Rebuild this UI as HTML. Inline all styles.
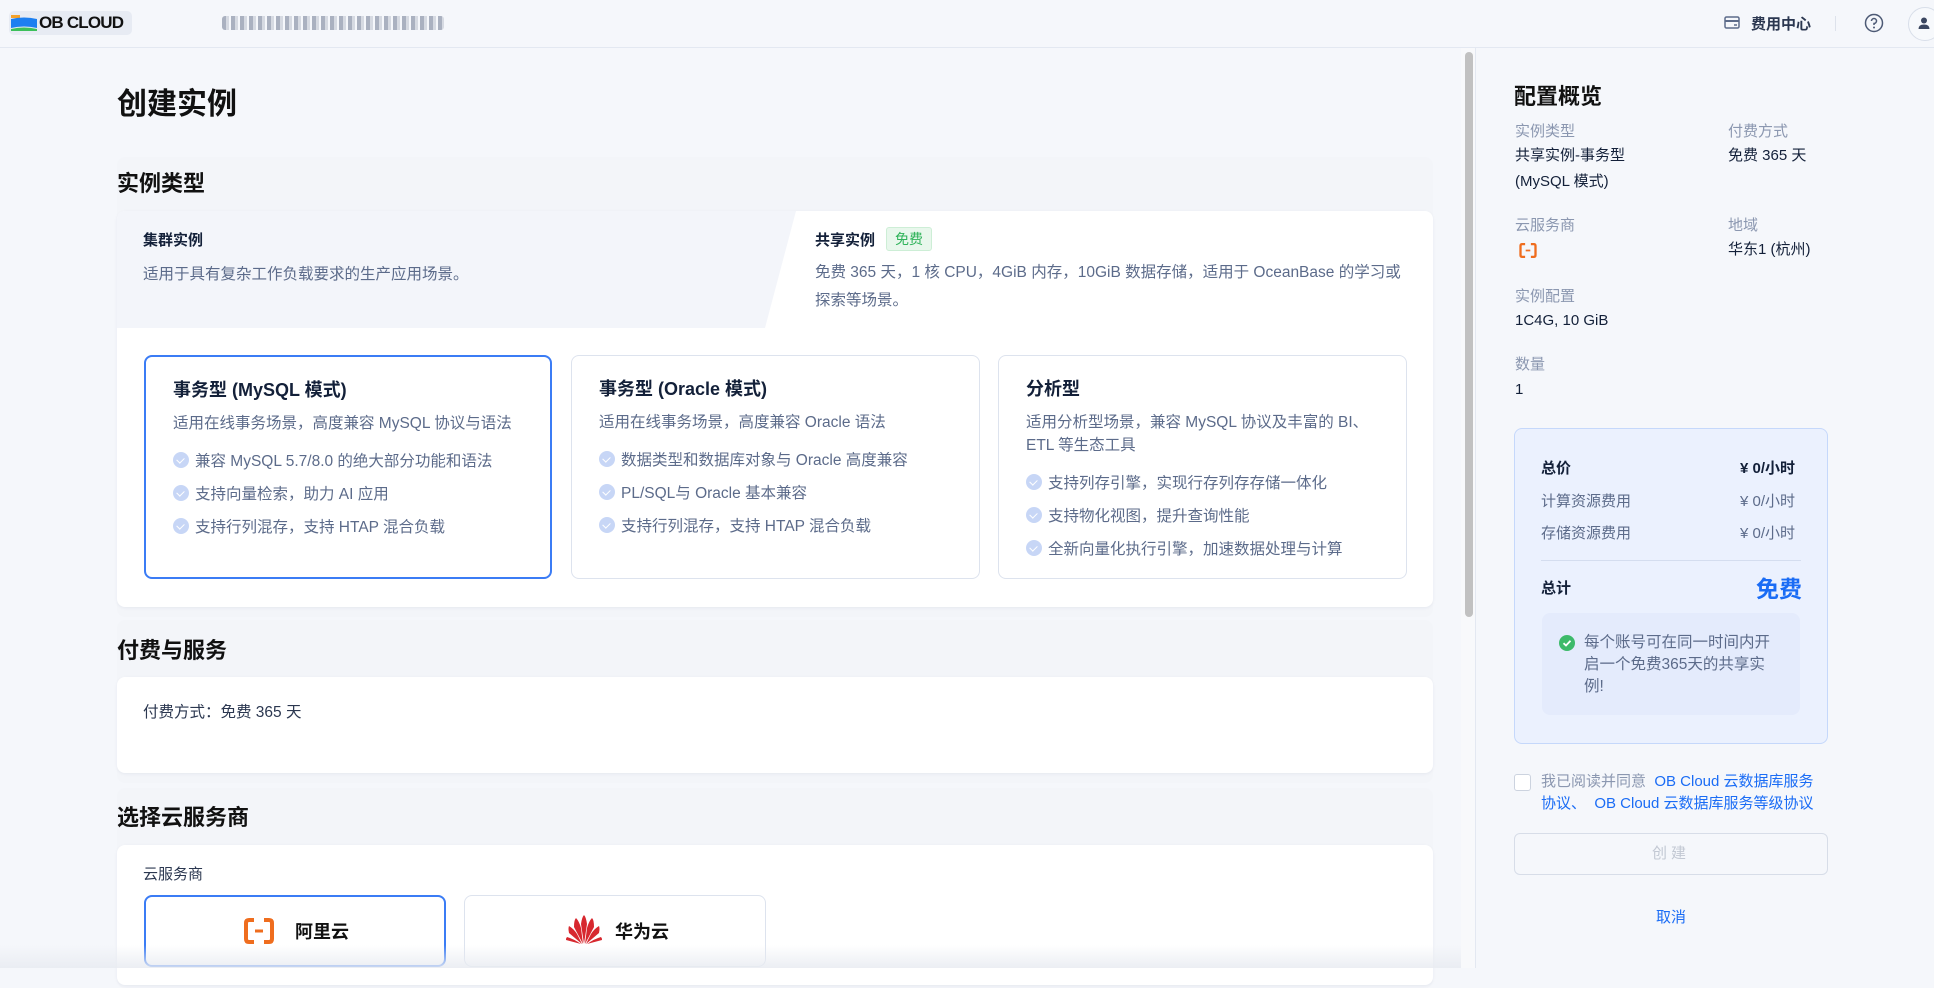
<!DOCTYPE html>
<html><head><meta charset="utf-8"><style>
*{margin:0;padding:0;box-sizing:border-box}
body{width:1934px;height:968px;overflow:hidden;background:#f5f7fb;font-family:"Liberation Sans","Noto Sans CJK SC",sans-serif;color:#132039;position:relative}
.a{position:absolute;white-space:nowrap}
.hdr{position:absolute;left:0;top:0;width:1934px;height:48px;background:#f5f7fb;border-bottom:1px solid #e3e8f1}
.panel{position:absolute;left:117px;width:1316px;background:#f3f5f9;border-radius:8px}
.white{position:absolute;background:#fff;border-radius:8px;box-shadow:0 1px 3px rgba(20,40,80,.06)}
.card{position:absolute;top:355px;height:224px;background:#fff;border:1.5px solid #dde3ee;border-radius:8px}
.card.sel{border:2px solid #3b7cf5}
.ct{position:absolute;left:27px;top:19px;font-size:18px;font-weight:bold;color:#132039}
.cd{position:absolute;left:27px;font-size:15.5px;color:#5c6b8a;line-height:23px;white-space:nowrap}
.bl{position:absolute;left:27px;font-size:15.5px;color:#5c6b8a;white-space:nowrap}
.bl i{display:inline-block;width:16px;height:16px;border-radius:50%;background:#c7d6f6;vertical-align:-2px;margin-right:6px;position:relative}
.bl i:after{content:"";position:absolute;left:5px;top:4px;width:4px;height:6px;border:solid #fff;border-width:0 1.6px 1.6px 0;transform:rotate(45deg)}
.lb{position:absolute;font-size:15px;color:#8b97b0;white-space:nowrap}
.vl{position:absolute;font-size:15px;color:#132039;white-space:nowrap;line-height:26px}
.pr{position:absolute;font-size:15px;white-space:nowrap}
</style></head><body>
<div class="hdr"></div>
<div class="a" style="left:9px;top:11px;width:123px;height:24px;background:#e7ebf3;border-radius:5px"></div>
<svg class="a" style="left:11px;top:15px" width="26" height="17" viewBox="0 0 26 17"><rect x="0" y="0" width="9" height="3" fill="#f5a22a"/><path d="M0 4 Q13 1 26 4 V13 Q13 10 0 13Z" fill="#1d7ff0"/><path d="M0 14 Q13 11 26 14 V16 H0Z" fill="#3cc05a"/></svg>
<div class="a" style="left:39px;top:13px;font-size:17px;font-weight:bold;letter-spacing:-0.8px;color:#111">OB CLOUD</div>
<div class="a" style="left:222px;top:16px;width:222px;height:14px;background:repeating-linear-gradient(90deg,#8a93a6 0 4px,#c9ced8 4px 7px,#f5f7fb 7px 9px);opacity:.7;border-radius:3px"></div>
<svg class="a" style="left:1724px;top:16px" width="16" height="13" viewBox="0 0 16 13"><rect x="1" y="1" width="14" height="11" rx="1.5" fill="none" stroke="#5c6b8a" stroke-width="1.5"/><path d="M1 5 H15" stroke="#5c6b8a" stroke-width="2"/><path d="M10 9 H13" stroke="#5c6b8a" stroke-width="1.5"/></svg>
<div class="a" style="left:1751px;top:13px;font-size:15px;font-weight:bold;color:#2b3750">费用中心</div>
<div class="a" style="left:1835px;top:16px;width:1px;height:15px;background:#dde2eb"></div>
<svg class="a" style="left:1864px;top:13px" width="20" height="20" viewBox="0 0 20 20"><circle cx="10" cy="10" r="8.5" fill="none" stroke="#4d5a75" stroke-width="1.5"/><path d="M7.5 8 A2.5 2.5 0 1 1 10 10.5 V12" fill="none" stroke="#4d5a75" stroke-width="1.5"/><circle cx="10" cy="14.5" r="1" fill="#4d5a75"/></svg>
<div class="a" style="left:1908px;top:7px;width:34px;height:34px;border-radius:50%;border:1px solid #d8dee9;background:#f7f9fc"></div>
<svg class="a" style="left:1917px;top:16px" width="14" height="14" viewBox="0 0 14 14"><circle cx="7" cy="4.5" r="3" fill="#3a4660"/><path d="M1.5 13 Q1.5 8.5 7 8.5 Q12.5 8.5 12.5 13Z" fill="#3a4660"/></svg>

<div class="a" style="left:117px;top:79px;font-size:30px;font-weight:bold;color:#111">创建实例</div>

<div class="panel" style="top:157px;height:460px"></div>
<div class="a" style="left:117px;top:166px;font-size:22px;font-weight:bold;color:#111">实例类型</div>
<div class="white" style="left:117px;top:211px;width:1316px;height:396px"></div>
<svg class="a" style="left:117px;top:211px" width="680" height="117"><path d="M8 0 H679 L648 117 H0 V8 Q0 0 8 0Z" fill="#f3f5fa"/></svg>
<div class="a" style="left:143px;top:229px;font-size:15px;font-weight:bold">集群实例</div>
<div class="a" style="left:143px;top:262px;font-size:15.5px;color:#5c6b8a">适用于具有复杂工作负载要求的生产应用场景。</div>
<div class="a" style="left:815px;top:229px;font-size:15px;font-weight:bold">共享实例</div>
<div class="a" style="left:886px;top:227px;width:46px;height:24px;background:#e8f7ec;border:1px solid #cdeed6;border-radius:3px;color:#2fb35a;font-size:14px;text-align:center;line-height:22px">免费</div>
<div class="a" style="left:815px;top:259px;font-size:15.5px;color:#5c6b8a;line-height:28px">免费 365 天，1 核 CPU，4GiB 内存，10GiB 数据存储，适用于 OceanBase 的学习或<br>探索等场景。</div>

<div class="card sel" style="left:144px;width:408px">
<div class="ct">事务型 (MySQL 模式)</div>
<div class="cd" style="top:55px">适用在线事务场景，高度兼容 MySQL 协议与语法</div>
<div class="bl" style="top:92px"><i></i>兼容 MySQL 5.7/8.0 的绝大部分功能和语法</div>
<div class="bl" style="top:125px"><i></i>支持向量检索，助力 AI 应用</div>
<div class="bl" style="top:158px"><i></i>支持行列混存，支持 HTAP 混合负载</div>
</div>
<div class="card" style="left:571px;width:409px">
<div class="ct">事务型 (Oracle 模式)</div>
<div class="cd" style="top:55px">适用在线事务场景，高度兼容 Oracle 语法</div>
<div class="bl" style="top:92px"><i></i>数据类型和数据库对象与 Oracle 高度兼容</div>
<div class="bl" style="top:125px"><i></i>PL/SQL与 Oracle 基本兼容</div>
<div class="bl" style="top:158px"><i></i>支持行列混存，支持 HTAP 混合负载</div>
</div>
<div class="card" style="left:998px;width:409px">
<div class="ct">分析型</div>
<div class="cd" style="top:55px">适用分析型场景，兼容 MySQL 协议及丰富的 BI、<br>ETL 等生态工具</div>
<div class="bl" style="top:115px"><i></i>支持列存引擎，实现行存列存存储一体化</div>
<div class="bl" style="top:148px"><i></i>支持物化视图，提升查询性能</div>
<div class="bl" style="top:181px"><i></i>全新向量化执行引擎，加速数据处理与计算</div>
</div>

<div class="panel" style="top:620px;height:163px"></div>
<div class="a" style="left:117px;top:633px;font-size:22px;font-weight:bold;color:#111">付费与服务</div>
<div class="white" style="left:117px;top:677px;width:1316px;height:96px"></div>
<div class="a" style="left:143px;top:700px;font-size:15.5px;color:#2b3750">付费方式：免费 365 天</div>

<div class="panel" style="top:788px;height:200px"></div>
<div class="a" style="left:117px;top:800px;font-size:22px;font-weight:bold;color:#111">选择云服务商</div>
<div class="white" style="left:117px;top:845px;width:1316px;height:140px"></div>
<div class="a" style="left:143px;top:863px;font-size:15px;color:#2b3750">云服务商</div>
<div class="a" style="left:144px;top:895px;width:302px;height:72px;border:2px solid #3b7cf5;border-radius:8px;background:#fff"></div>
<svg class="a" style="left:244px;top:918px" width="30" height="26" viewBox="0 0 30 26"><path d="M10 2 H5 Q2 2 2 5 V21 Q2 24 5 24 H10" fill="none" stroke="#ef6d1e" stroke-width="4"/><path d="M20 2 H25 Q28 2 28 5 V21 Q28 24 25 24 H20" fill="none" stroke="#ef6d1e" stroke-width="4"/><path d="M11 13 H19" stroke="#ef6d1e" stroke-width="3"/></svg>
<div class="a" style="left:295px;top:918px;font-size:18px;font-weight:bold;color:#111">阿里云</div>
<div class="a" style="left:464px;top:895px;width:302px;height:72px;border:1.5px solid #dde3ee;border-radius:8px;background:#fff"></div>
<svg class="a" style="left:565px;top:914px" width="38" height="32" viewBox="0 0 38 32"><g fill="#d7282f"><path d="M19 30 L16 10 Q17 3 19 1 Q21 3 22 10Z"/><path d="M18 30 L9 13 Q9 6 11 4 Q14 7 16 14Z"/><path d="M20 30 L29 13 Q29 6 27 4 Q24 7 22 14Z"/><path d="M17 30 L4 19 Q3 14 4 12 Q9 15 12 20Z"/><path d="M21 30 L34 19 Q35 14 34 12 Q29 15 26 20Z"/><path d="M16 30 L1 26 Q1 24 2 23 Q9 25 16 30Z"/><path d="M22 30 L37 26 Q37 24 36 23 Q29 25 22 30Z"/></g></svg>
<div class="a" style="left:615px;top:918px;font-size:18px;font-weight:bold;color:#111">华为云</div>

<div class="a" style="left:0;top:945px;width:1461px;height:23px;background:linear-gradient(rgba(245,247,251,0),rgba(232,235,241,.85))"></div>

<div class="a" style="left:1461px;top:48px;width:15px;height:920px;background:#f8f9fb;border-right:1px solid #e3e8f1"></div>
<div class="a" style="left:1465px;top:52px;width:8px;height:565px;background:#c1c1c1;border-radius:4px"></div>

<div class="a" style="left:1514px;top:79px;font-size:22px;font-weight:bold;color:#111">配置概览</div>
<div class="lb" style="left:1515px;top:120px">实例类型</div>
<div class="vl" style="left:1515px;top:143px">共享实例-事务型<br>(MySQL 模式)</div>
<div class="lb" style="left:1728px;top:120px">付费方式</div>
<div class="vl" style="left:1728px;top:143px">免费 365 天</div>
<div class="lb" style="left:1515px;top:214px">云服务商</div>
<svg class="a" style="left:1516px;top:243px" width="24" height="15" viewBox="0 0 30 26"><path d="M10 2 H5 Q2 2 2 5 V21 Q2 24 5 24 H10" fill="none" stroke="#ef6d1e" stroke-width="4"/><path d="M20 2 H25 Q28 2 28 5 V21 Q28 24 25 24 H20" fill="none" stroke="#ef6d1e" stroke-width="4"/><path d="M11 13 H19" stroke="#ef6d1e" stroke-width="3"/></svg>
<div class="lb" style="left:1728px;top:214px">地域</div>
<div class="vl" style="left:1728px;top:237px">华东1 (杭州)</div>
<div class="lb" style="left:1515px;top:285px">实例配置</div>
<div class="vl" style="left:1515px;top:308px">1C4G, 10 GiB</div>
<div class="lb" style="left:1515px;top:353px">数量</div>
<div class="vl" style="left:1515px;top:377px">1</div>

<div class="a" style="left:1514px;top:428px;width:314px;height:316px;background:#ebf1fe;border:1.5px solid #c5d8fb;border-radius:8px"></div>
<div class="pr" style="left:1541px;top:457px;font-weight:bold">总价</div>
<div class="pr" style="left:1740px;top:457px;font-weight:bold">¥ 0/小时</div>
<div class="pr" style="left:1541px;top:490px;color:#5c6b8a">计算资源费用</div>
<div class="pr" style="left:1740px;top:490px;color:#5c6b8a">¥ 0/小时</div>
<div class="pr" style="left:1541px;top:522px;color:#5c6b8a">存储资源费用</div>
<div class="pr" style="left:1740px;top:522px;color:#5c6b8a">¥ 0/小时</div>
<div class="a" style="left:1541px;top:560px;width:260px;height:1px;background:#d4ddef"></div>
<div class="pr" style="left:1541px;top:577px;font-weight:bold">总计</div>
<div class="pr" style="left:1756px;top:570px;font-weight:bold;color:#1a6cf5;font-size:23px">免费</div>
<div class="a" style="left:1542px;top:613px;width:258px;height:102px;background:#e4ebfc;border-radius:8px"></div>
<svg class="a" style="left:1559px;top:635px" width="16" height="16" viewBox="0 0 16 16"><circle cx="8" cy="8" r="8" fill="#3dba6a"/><path d="M4.5 8.2 L7 10.5 L11.5 5.8" fill="none" stroke="#fff" stroke-width="1.8"/></svg>
<div class="a" style="left:1584px;top:632px;font-size:15.5px;color:#5c6b8a;line-height:22px;white-space:normal;width:190px">每个账号可在同一时间内开启一个免费365天的共享实例!</div>

<div class="a" style="left:1514px;top:774px;width:17px;height:17px;border:1px solid #ccd3df;border-radius:3px;background:#fff"></div>
<div class="a" style="left:1541px;top:771px;font-size:15px;line-height:22px;color:#8b97b0">我已阅读并同意 <span style="color:#1a6cf5">&nbsp;OB Cloud 云数据库服务</span><br><span style="color:#1a6cf5">协议、 &nbsp;OB Cloud 云数据库服务等级协议</span></div>
<div class="a" style="left:1514px;top:833px;width:314px;height:42px;border:1px solid #d7dde8;border-radius:6px;background:#f5f7fb;text-align:center;line-height:40px;font-size:15px;color:#c2c8d3;letter-spacing:4px">创建</div>
<div class="a" style="left:1656px;top:906px;font-size:15px;color:#1a6cf5">取消</div>
</body></html>
